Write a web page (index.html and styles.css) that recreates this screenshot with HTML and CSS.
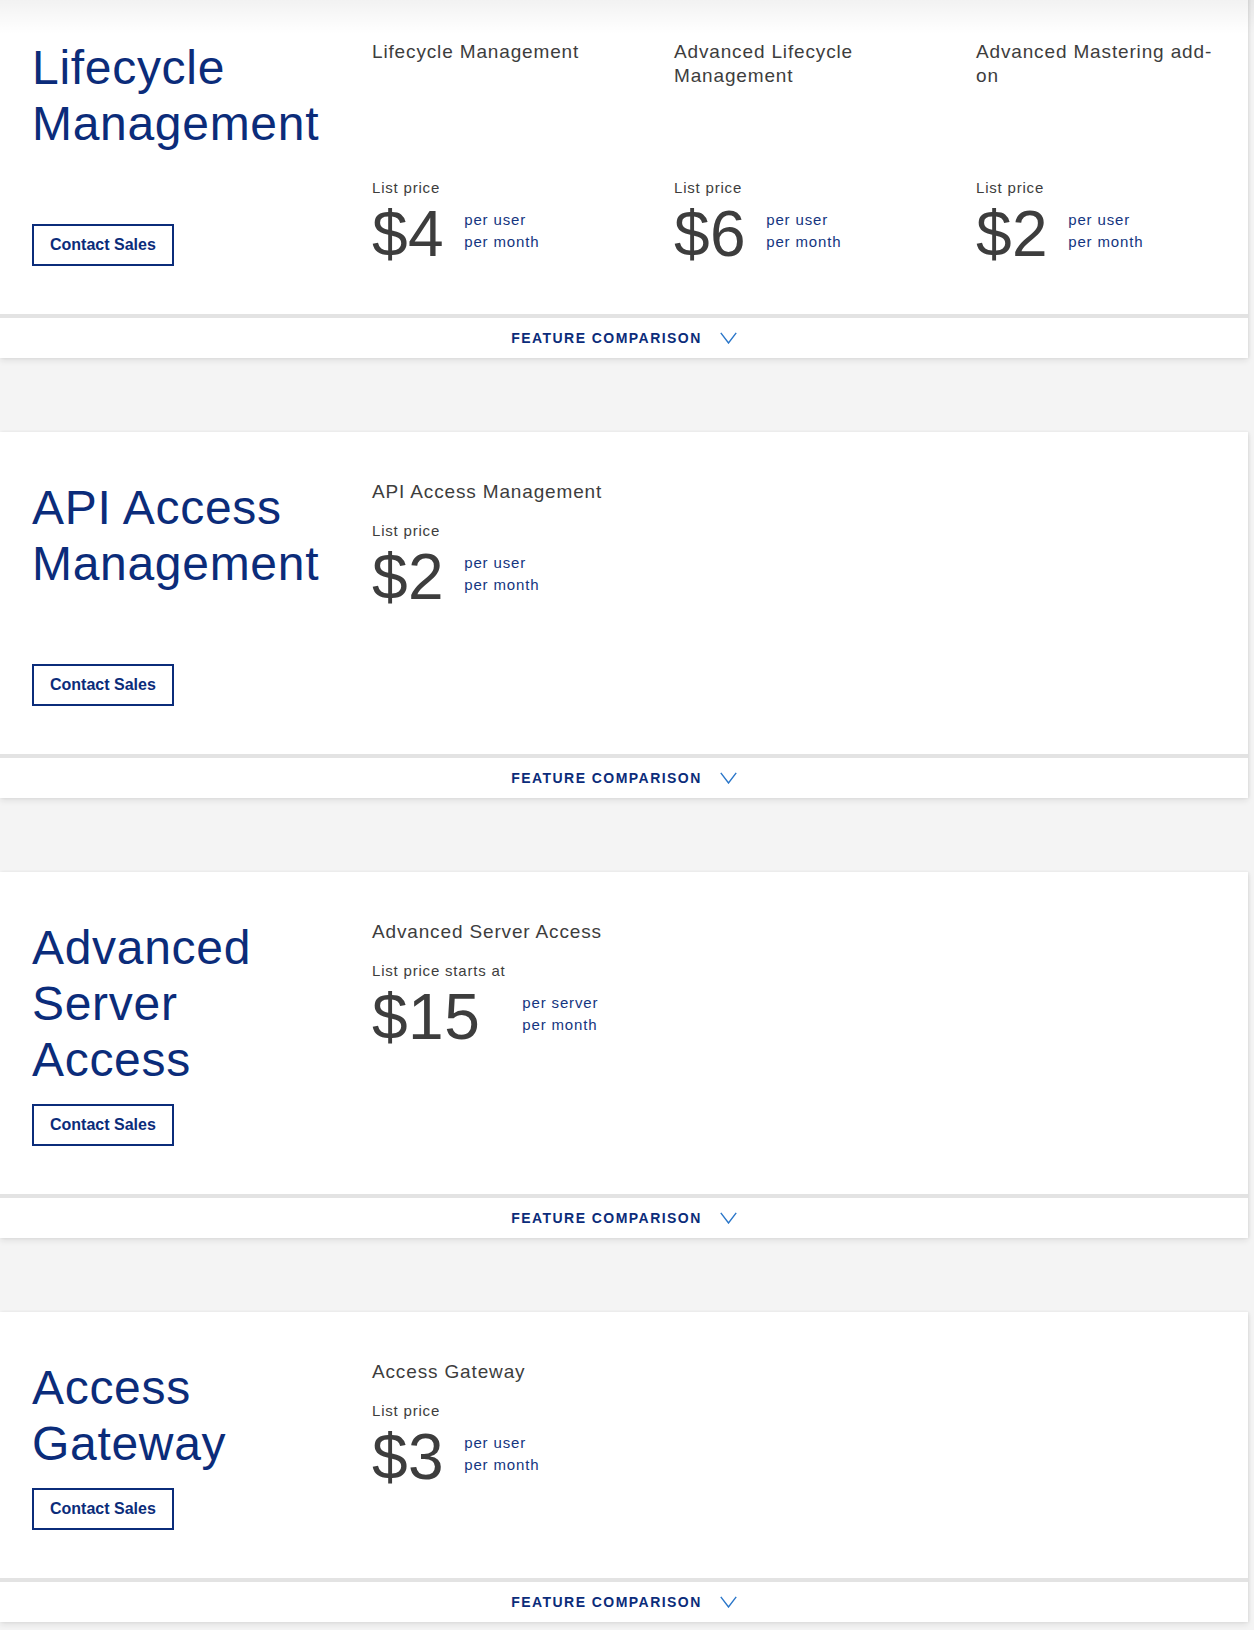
FILE: index.html
```html
<!DOCTYPE html>
<html lang="en">
<head>
<meta charset="utf-8">
<title>Pricing</title>
<link rel="stylesheet" href="styles.css">
</head>
<body>
<div class="top-shade"></div>
<main class="plans">

  <section class="plan">
    <div class="plan-card plan-card--tall">
      <div class="plan-intro">
        <h2 class="plan-name">Lifecycle Management</h2>
        <a class="btn-outline" href="#">Contact Sales</a>
      </div>
      <div class="plan-products plan-products--multi">
        <div class="product">
          <h3 class="product-name">Lifecycle Management</h3>
          <div class="price">
            <div class="price-label">List price</div>
            <div class="price-row">
              <span class="price-amount">$4</span>
              <span class="price-unit">per user<br>per month</span>
            </div>
          </div>
        </div>
        <div class="product">
          <h3 class="product-name">Advanced Lifecycle Management</h3>
          <div class="price">
            <div class="price-label">List price</div>
            <div class="price-row">
              <span class="price-amount">$6</span>
              <span class="price-unit">per user<br>per month</span>
            </div>
          </div>
        </div>
        <div class="product">
          <h3 class="product-name">Advanced Mastering add-on</h3>
          <div class="price">
            <div class="price-label">List price</div>
            <div class="price-row">
              <span class="price-amount">$2</span>
              <span class="price-unit">per user<br>per month</span>
            </div>
          </div>
        </div>
      </div>
    </div>
    <button class="feature-toggle" type="button">
      <span class="feature-toggle-label">FEATURE COMPARISON</span>
      <svg class="chevron" width="17" height="12" viewBox="0 0 17 12" aria-hidden="true"><polyline points="0.8,0.8 8.5,11 16.2,0.8" fill="none" stroke="currentColor" stroke-width="1.4"/></svg>
    </button>
  </section>

  <section class="plan">
    <div class="plan-card plan-card--tall">
      <div class="plan-intro">
        <h2 class="plan-name">API Access Management</h2>
        <a class="btn-outline" href="#">Contact Sales</a>
      </div>
      <div class="plan-products">
        <div class="product">
          <h3 class="product-name">API Access Management</h3>
          <div class="price">
            <div class="price-label">List price</div>
            <div class="price-row">
              <span class="price-amount">$2</span>
              <span class="price-unit">per user<br>per month</span>
            </div>
          </div>
        </div>
      </div>
    </div>
    <button class="feature-toggle" type="button">
      <span class="feature-toggle-label">FEATURE COMPARISON</span>
      <svg class="chevron" width="17" height="12" viewBox="0 0 17 12" aria-hidden="true"><polyline points="0.8,0.8 8.5,11 16.2,0.8" fill="none" stroke="currentColor" stroke-width="1.4"/></svg>
    </button>
  </section>

  <section class="plan">
    <div class="plan-card">
      <div class="plan-intro">
        <h2 class="plan-name">Advanced Server Access</h2>
        <a class="btn-outline" href="#">Contact Sales</a>
      </div>
      <div class="plan-products">
        <div class="product">
          <h3 class="product-name">Advanced Server Access</h3>
          <div class="price">
            <div class="price-label">List price starts at</div>
            <div class="price-row">
              <span class="price-amount">$15</span>
              <span class="price-unit price-unit--wide">per server<br>per month</span>
            </div>
          </div>
        </div>
      </div>
    </div>
    <button class="feature-toggle" type="button">
      <span class="feature-toggle-label">FEATURE COMPARISON</span>
      <svg class="chevron" width="17" height="12" viewBox="0 0 17 12" aria-hidden="true"><polyline points="0.8,0.8 8.5,11 16.2,0.8" fill="none" stroke="currentColor" stroke-width="1.4"/></svg>
    </button>
  </section>

  <section class="plan">
    <div class="plan-card">
      <div class="plan-intro">
        <h2 class="plan-name">Access Gateway</h2>
        <a class="btn-outline" href="#">Contact Sales</a>
      </div>
      <div class="plan-products">
        <div class="product">
          <h3 class="product-name">Access Gateway</h3>
          <div class="price">
            <div class="price-label">List price</div>
            <div class="price-row">
              <span class="price-amount">$3</span>
              <span class="price-unit">per user<br>per month</span>
            </div>
          </div>
        </div>
      </div>
    </div>
    <button class="feature-toggle" type="button">
      <span class="feature-toggle-label">FEATURE COMPARISON</span>
      <svg class="chevron" width="17" height="12" viewBox="0 0 17 12" aria-hidden="true"><polyline points="0.8,0.8 8.5,11 16.2,0.8" fill="none" stroke="currentColor" stroke-width="1.4"/></svg>
    </button>
  </section>

</main>
</body>
</html>
```

FILE: styles.css
```css
* { box-sizing: border-box; }

html, body {
  margin: 0;
  padding: 0;
  background: #f4f4f4;
  font-family: "Liberation Sans", Arial, sans-serif;
  color: #3d3d3d;
}

body {
  position: relative;
  height: 1630px;
  overflow: hidden;
}

.top-shade {
  position: absolute;
  top: 0;
  left: 0;
  right: 0;
  height: 34px;
  background: linear-gradient(to bottom, rgba(0,0,0,0.05), rgba(0,0,0,0));
  z-index: 5;
  pointer-events: none;
}

.plans {
  margin-top: -8px;
  margin-right: 6px;
  display: flex;
  flex-direction: column;
  gap: 74px;
}

.plan {
  background: #fff;
  box-shadow: 1px 0 3px rgba(0,0,0,0.07), 0 3px 6px rgba(0,0,0,0.08);
}

.plan-card {
  display: flex;
  padding: 48px 32px 48px 32px;
}

.plan-card--tall {
  min-height: 322px;
}

.plan-intro {
  flex: 0 0 340px;
  padding-right: 30px;
  display: flex;
  flex-direction: column;
  align-items: flex-start;
}

.plan-name {
  margin: 0 0 16px 0;
  font-size: 48px;
  line-height: 56px;
  font-weight: 400;
  letter-spacing: 0.7px;
  color: #0b2c7a;
}

.btn-outline {
  margin-top: auto;
  display: inline-block;
  height: 42px;
  padding: 0 16px;
  border: 2px solid #0b2c7a;
  color: #0b2c7a;
  font-size: 16px;
  font-weight: 700;
  line-height: 38px;
  text-decoration: none;
  white-space: nowrap;
}

.plan-products {
  flex: 1;
  display: grid;
  grid-template-columns: repeat(3, 240px);
  column-gap: 62px;
  align-items: start;
}

.plan-products--multi {
  align-items: stretch;
}

.plan-products--multi .product {
  display: flex;
  flex-direction: column;
  justify-content: space-between;
}

.product-name {
  margin: 0 0 17px 0;
  font-size: 19px;
  line-height: 24px;
  font-weight: 400;
  letter-spacing: 0.85px;
  color: #3d3d3d;
}

.plan-products:not(.plan-products--multi) .product {
  grid-column: 1 / span 2;
}

.price-label {
  font-size: 15px;
  line-height: 20px;
  letter-spacing: 0.8px;
  margin-bottom: 4px;
  color: #3d3d3d;
}

.price-row {
  display: flex;
  align-items: flex-start;
}

.price-amount {
  font-size: 64px;
  line-height: 64px;
  color: #3d3d3d;
  letter-spacing: 0.5px;
}

.price-unit {
  margin-left: 20px;
  margin-top: 7px;
  font-size: 15px;
  line-height: 22px;
  letter-spacing: 0.85px;
  color: #143580;
}

.price-unit--wide {
  margin-left: 42px;
}

.feature-toggle {
  display: flex;
  width: 100%;
  height: 44px;
  align-items: center;
  justify-content: center;
  margin: 0;
  padding: 0;
  background: #fff;
  border: 0;
  border-top: 4px solid #e3e3e3;
  font-family: inherit;
  cursor: pointer;
}

.feature-toggle-label {
  font-size: 14px;
  font-weight: 700;
  letter-spacing: 1.45px;
  color: #0b2c7a;
}

.chevron {
  margin-left: 18px;
  color: #2a76c9;
  display: block;
}
```
